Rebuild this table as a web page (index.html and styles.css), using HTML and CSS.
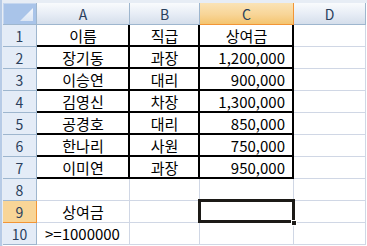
FILE: index.html
```html
<!DOCTYPE html>
<html lang="ko">
<head>
<meta charset="utf-8">
<link rel="stylesheet" href="styles.css">
</head>
<body>
<div class="sheet">
  <div class="grid">
    <div class="corner"><span class="tri"></span></div>
    <div class="ch">A</div>
    <div class="ch">B</div>
    <div class="ch sel">C</div>
    <div class="ch">D</div>

    <div class="rh">1</div>
    <div class="c t ctr">이름</div>
    <div class="c t ctr">직급</div>
    <div class="c t ctr">상여금</div>
    <div class="c"></div>

    <div class="rh">2</div>
    <div class="c t ctr">장기동</div>
    <div class="c t ctr">과장</div>
    <div class="c t num">1,200,000</div>
    <div class="c"></div>

    <div class="rh">3</div>
    <div class="c t ctr">이승연</div>
    <div class="c t ctr">대리</div>
    <div class="c t num">900,000</div>
    <div class="c"></div>

    <div class="rh">4</div>
    <div class="c t ctr">김영신</div>
    <div class="c t ctr">차장</div>
    <div class="c t num">1,300,000</div>
    <div class="c"></div>

    <div class="rh">5</div>
    <div class="c t ctr">공경호</div>
    <div class="c t ctr">대리</div>
    <div class="c t num">850,000</div>
    <div class="c"></div>

    <div class="rh">6</div>
    <div class="c t ctr">한나리</div>
    <div class="c t ctr">사원</div>
    <div class="c t num">750,000</div>
    <div class="c"></div>

    <div class="rh">7</div>
    <div class="c t ctr">이미연</div>
    <div class="c t ctr">과장</div>
    <div class="c t num">950,000</div>
    <div class="c"></div>

    <div class="rh">8</div>
    <div class="c"></div>
    <div class="c"></div>
    <div class="c"></div>
    <div class="c"></div>

    <div class="rh sel">9</div>
    <div class="c ctr">상여금</div>
    <div class="c"></div>
    <div class="c active"><span class="handle"></span></div>
    <div class="c"></div>

    <div class="rh">10</div>
    <div class="c left">&gt;=1000000</div>
    <div class="c"></div>
    <div class="c"></div>
    <div class="c"></div>
  </div>
</div>
</body>
</html>
```

FILE: styles.css
```css
* { box-sizing: border-box; }
html, body { margin: 0; padding: 0; }
body {
  width: 367px;
  height: 246px;
  overflow: hidden;
  background: #ffffff;
  font-family: "Noto Sans CJK KR", "Noto Sans", sans-serif;
}
.sheet {
  padding: 3px 0 0 3px;
  background: linear-gradient(to right, #b7cbe6 0, #b7cbe6 2px, #e7edf5 2px);
  height: 246px;
}
.grid {
  display: grid;
  grid-template-columns: 34px 93px 70px 94px 72px;
  grid-auto-rows: 22px;
  background: #ffffff;
  height: 243px;
}
.corner {
  position: relative;
  background: #a9c4e9;
  border-right: 1px solid #9eb6ce;
  border-bottom: 1px solid #9eb6ce;
  box-shadow: inset 1px 1px 0 #c6d7ef;
}
.tri {
  position: absolute;
  right: 3px;
  bottom: 3px;
  width: 13px;
  height: 13px;
  background: linear-gradient(to bottom, #f4f7fc, #dce6f4);
  clip-path: polygon(100% 0, 100% 100%, 0 100%);
}
.ch {
  display: flex;
  align-items: center;
  justify-content: center;
  background: linear-gradient(to bottom, #f9fbfd 0%, #e6ecf5 55%, #d5deeb 100%);
  border-right: 1px solid #9eb6ce;
  border-bottom: 1px solid #9eb6ce;
  color: #2a3f5c;
  font-size: 14px;
  padding-top: 1px;
}
.ch.sel {
  background: linear-gradient(to bottom, #fae3b6 0%, #f8d597 55%, #f4c46f 100%);
  border-bottom: 1px solid #f29536;
  border-right-color: #f29536;
}
.rh {
  display: flex;
  align-items: center;
  justify-content: center;
  background: #e4ecf7;
  border-right: 1px solid #9eb6ce;
  border-bottom: 1px solid #9eb6ce;
  color: #2a3f5c;
  font-size: 14px;
}
.rh.sel {
  background: #f8d597;
  border-right-color: #f29536;
  border-bottom-color: #f29536;
}
.c {
  position: relative;
  display: flex;
  align-items: center;
  border-right: 1px solid #d0d7e5;
  border-bottom: 1px solid #d0d7e5;
  font-size: 15px;
  color: #000000;
  white-space: nowrap;
}
.c.t {
  border-right-color: #000000;
  border-bottom-color: #000000;
  box-shadow: inset -1px -1px 0 #000000;
}
.ctr { justify-content: center; }
.num { justify-content: flex-end; padding-right: 8px; }
.left { padding-left: 8px; word-spacing: 0; }
.active::after {
  content: "";
  position: absolute;
  left: -2px;
  top: -2px;
  right: -2px;
  bottom: -1px;
  border: 3px solid #1c1a17;
}
.handle {
  position: absolute;
  right: -4px;
  bottom: -4px;
  width: 6px;
  height: 6px;
  background: #1c1a17;
  border: 1px solid #ffffff;
  z-index: 2;
}
```
